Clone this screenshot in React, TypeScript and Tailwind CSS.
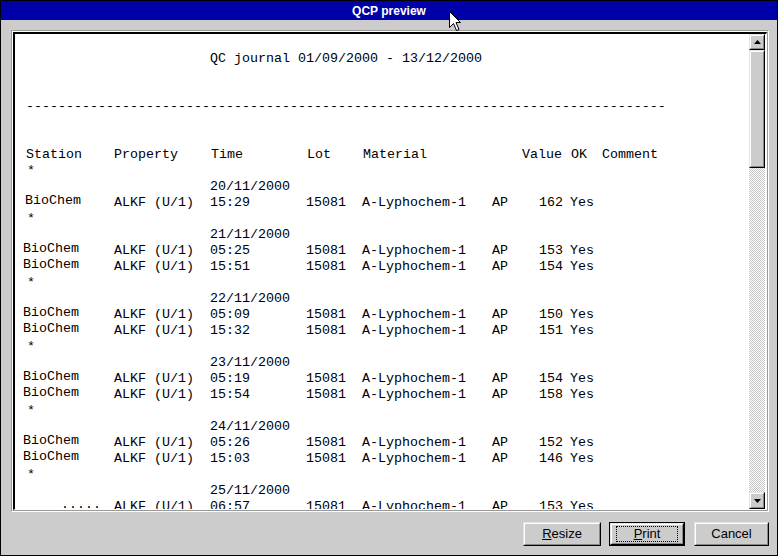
import React from 'react';

type Row = { time: string; value: string };
type Day = { date: string; rows: Row[] };

const days: Day[] = [
  { date: '20/11/2000', rows: [{ time: '15:29', value: '162' }] },
  { date: '21/11/2000', rows: [{ time: '05:25', value: '153' }, { time: '15:51', value: '154' }] },
  { date: '22/11/2000', rows: [{ time: '05:09', value: '150' }, { time: '15:32', value: '151' }] },
  { date: '23/11/2000', rows: [{ time: '05:19', value: '154' }, { time: '15:54', value: '158' }] },
  { date: '24/11/2000', rows: [{ time: '05:26', value: '152' }, { time: '15:03', value: '146' }] },
  { date: '25/11/2000', rows: [{ time: '06:57', value: '153' }] },
];

const Line: React.FC<{ children?: React.ReactNode }> = ({ children }) => (
  <div className="h-[16px] flex items-center whitespace-pre">{children}</div>
);

const DataRow: React.FC<{ station: React.ReactNode; time: string; value: string; first?: boolean }> = ({ station, time, value, first }) => (
  <Line>
    <span className={`w-[89px] -translate-y-[2px] ${first ? '' : '-ml-[2px] mr-[2px]'}`}>{station}</span>
    <span className="w-[96px]">ALKF (U/1)</span>
    <span className="w-[96px]">{time}</span>
    <span className="w-[56px]">15081</span>
    <span className="w-[130px]">A-Lyphochem-1</span>
    <span className="w-[29px]">AP</span>
    <span className="w-[42px] text-right">{value}</span>
    <span className="w-[7px]" />
    <span className="w-[31px]">Yes</span>
  </Line>
);

const Raised: React.FC<{ className?: string; children?: React.ReactNode }> = ({ className = '', children }) => (
  <div className={`border border-t-[#e4e4e4] border-l-[#e4e4e4] border-b-black border-r-black bg-[#cccccc] ${className}`}>
    <div className="w-full h-full border border-t-white border-l-white border-b-[#888888] border-r-[#888888] flex items-center justify-center">
      {children}
    </div>
  </div>
);

const App: React.FC = () => {
  return (
    <div className="w-[778px] h-[556px] border border-black bg-[#cccccc] flex flex-col relative overflow-hidden select-none">
      {/* title bar */}
      <div className="h-[19px] bg-[#0000a8] flex items-center justify-center">
        <span className="text-white font-bold text-[12px] font-['Liberation_Sans',Arial,sans-serif]">QCP preview</span>
      </div>

      {/* preview frame */}
      <div className="ml-[10px] mt-[10px] w-[758px] h-[482px] border border-t-[#999999] border-l-[#999999] border-b-white border-r-white">
        <div className="w-full h-full border border-t-white border-l-white border-b-[#999999] border-r-[#999999]">
          <div className="w-full h-full border-t-2 border-l-2 border-b border-r border-t-black border-l-black border-b-white border-r-white bg-white flex">
            <div className="flex-1 overflow-hidden pt-[17px] pl-[10px] text-black text-[13.333px] font-['Liberation_Mono','Courier_New',monospace]">
              <Line><span className="ml-[185px]">QC journal 01/09/2000 - 13/12/2000</span></Line>
              <Line />
              <Line />
              <Line><span className="ml-[1px]">{'-'.repeat(80)}</span></Line>
              <Line />
              <Line />
              <Line>
                <span className="w-[88px] ml-[1px]">Station</span>
                <span className="w-[97px]">Property</span>
                <span className="w-[96px]">Time</span>
                <span className="w-[56px]">Lot</span>
                <span className="w-[159px]">Material</span>
                <span className="w-[49px]">Value</span>
                <span className="w-[31px]">OK</span>
                <span>Comment</span>
              </Line>
              {days.map((d, di) => (
                <React.Fragment key={d.date}>
                  <Line><span className="ml-[2px]">*</span></Line>
                  <Line><span className="ml-[185px]">{d.date}</span></Line>
                  {d.rows.map((r) => {
                    const last = di === days.length - 1;
                    return (
                      <DataRow
                        key={r.time}
                        first={di === 0}
                        station={last ? <span className="ml-[38px]">.....</span> : 'BioChem'}
                        time={r.time}
                        value={r.value}
                      />
                    );
                  })}
                </React.Fragment>
              ))}
            </div>

            {/* scrollbar */}
            <div className="w-[17px] flex flex-col">
              <Raised className="h-[16px] w-[16px]">
                <svg width="7" height="4" viewBox="0 0 7 4"><path d="M3.5 0 L7 4 L0 4 Z" fill="black" /></svg>
              </Raised>
              <Raised className="h-[118px] w-[16px]" />
              <div className="flex-1 w-[16px] bg-[repeating-conic-gradient(#c4c4c4_0_25%,#ffffff_0_50%)] bg-[length:2px_2px]" />
              <Raised className="h-[17px] w-[16px]">
                <svg width="7" height="4" viewBox="0 0 7 4"><path d="M0 0 L7 0 L3.5 4 Z" fill="black" /></svg>
              </Raised>
            </div>
          </div>
        </div>
      </div>

      {/* buttons */}
      <div className="mt-[10px] flex justify-end pr-[8px] text-[13px] text-black font-['Liberation_Sans',Arial,sans-serif]">
        <Raised className="w-[78px] h-[24px]">
          <span><span className="underline">R</span>esize</span>
        </Raised>
        <div className="ml-[8px] w-[76px] h-[24px] border border-black">
          <Raised className="w-full h-full">
            <span className="w-[62px] h-[16px] border border-dotted border-black flex items-center justify-center">
              <span><span className="underline">P</span>rint</span>
            </span>
          </Raised>
        </div>
        <Raised className="ml-[9px] w-[75px] h-[24px]">
          <span>Cancel</span>
        </Raised>
      </div>

      {/* mouse pointer */}
      <svg className="absolute left-[448px] top-[10px]" width="13" height="21" viewBox="0 0 13 21">
        <path d="M0.5 0.5 L0.5 16.5 L4.5 12.5 L7.5 19.5 L10 18.5 L7 11.5 L11.5 11.5 Z" fill="white" stroke="black" strokeWidth="1" />
      </svg>
    </div>
  );
};

export default App;
